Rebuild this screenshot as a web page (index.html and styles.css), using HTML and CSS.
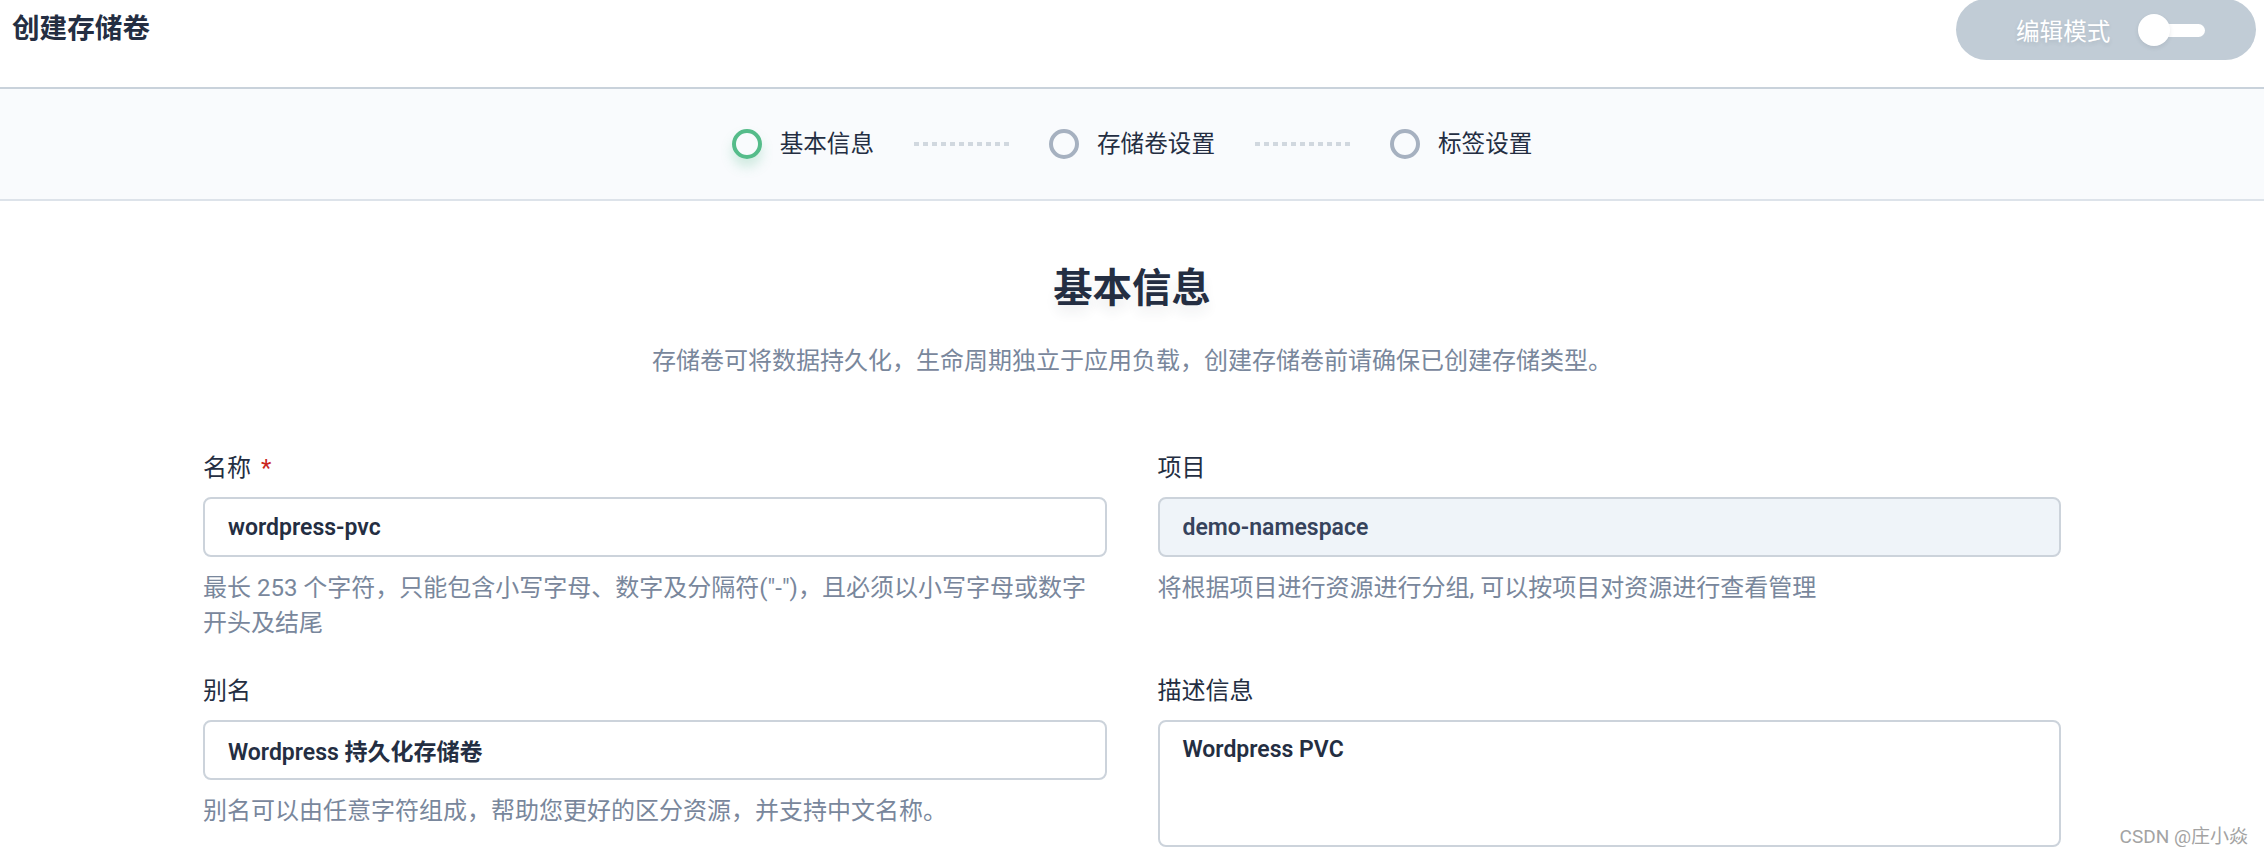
FILE: index.html
```html
<!DOCTYPE html>
<html lang="zh-CN">
<head>
    <meta charset="UTF-8">
    <meta name="viewport" content="width=device-width, initial-scale=1.0">
    <title>创建存储卷</title>
    <link rel="stylesheet" href="styles.css">
</head>
<body>
    <header class="top-bar">
        <h1 class="page-title">创建存储卷</h1>
        <div class="mode-toggle">
            <span class="mode-label">编辑模式</span>
            <span class="switch"></span>
        </div>
    </header>

    <nav class="steps">
        <div class="step active">
            <span class="step-dot"></span>
            <span class="step-name">基本信息</span>
        </div>
        <span class="step-line"></span>
        <div class="step">
            <span class="step-dot"></span>
            <span class="step-name">存储卷设置</span>
        </div>
        <span class="step-line"></span>
        <div class="step">
            <span class="step-dot"></span>
            <span class="step-name">标签设置</span>
        </div>
    </nav>

    <section class="content">
        <h2 class="section-title">基本信息</h2>
        <p class="section-desc">存储卷可将数据持久化，生命周期独立于应用负载，创建存储卷前请确保已创建存储类型。</p>

        <div class="form-grid">
            <div class="form-group">
                <label for="name">名称 <span class="required">*</span></label>
                <input type="text" id="name" value="wordpress-pvc">
                <p class="hint">最长 253 个字符，只能包含小写字母、数字及分隔符("-")，且必须以小写字母或数字开头及结尾</p>
            </div>
            <div class="form-group">
                <label for="project">项目</label>
                <input type="text" id="project" value="demo-namespace" disabled>
                <p class="hint">将根据项目进行资源进行分组, 可以按项目对资源进行查看管理</p>
            </div>
            <div class="form-group">
                <label for="alias">别名</label>
                <input type="text" id="alias" value="Wordpress 持久化存储卷">
                <p class="hint">别名可以由任意字符组成，帮助您更好的区分资源，并支持中文名称。</p>
            </div>
            <div class="form-group">
                <label for="desc">描述信息</label>
                <textarea id="desc">Wordpress PVC</textarea>
            </div>
        </div>
    </section>

    <div class="watermark">CSDN @庄小焱</div>
</body>
</html>
```

FILE: styles.css
```css
body {
    font-family: Roboto, "Noto Sans CJK SC", sans-serif;
    font-size: 24px;
    color: #242e42;
    background-color: #ffffff;
    margin: 0;
    padding: 0;
    overflow: hidden;
}
.top-bar {
    display: flex;
    justify-content: space-between;
    align-items: flex-start;
    height: 87px;
    padding: 0 8px 0 12px;
    border-bottom: 2px solid #c9d2db;
}
.page-title {
    margin: 0;
    font-size: 27.6px;
    font-weight: 700;
    line-height: 58px;
    color: #242e42;
}
.mode-toggle {
    display: flex;
    align-items: center;
    gap: 28px;
    width: 300px;
    height: 61px;
    margin-top: -1px;
    padding: 0 48px 0 60px;
    box-sizing: border-box;
    background: #c1ccd6;
    border-radius: 31px;
}
.mode-label {
    flex-shrink: 0;
    white-space: nowrap;
    color: #ffffff;
    font-size: 23.6px;
    text-shadow: 0 2px 4px rgba(36, 46, 66, 0.12);
}
.switch {
    position: relative;
    flex-shrink: 0;
    width: 67px;
    height: 32px;
}
.switch::before {
    content: "";
    position: absolute;
    left: 4px;
    right: 0;
    top: 10px;
    height: 13px;
    border-radius: 7px;
    background: #ffffff;
}
.switch::after {
    content: "";
    position: absolute;
    left: 0;
    top: 0;
    width: 32px;
    height: 32px;
    border-radius: 50%;
    background: #ffffff;
    box-shadow: 0 2px 4px rgba(36, 46, 66, 0.1);
}
.steps {
    display: flex;
    justify-content: center;
    align-items: center;
    height: 110px;
    background: #f9fbfd;
    border-bottom: 2px solid #dde3ea;
}
.step {
    display: flex;
    align-items: center;
    gap: 18px;
}
.step-dot {
    width: 22px;
    height: 22px;
    border: 4px solid #a6b1c0;
    border-radius: 50%;
}
.step.active .step-dot {
    border-color: #55bc8a;
    box-shadow: 0 8px 12px rgba(85, 188, 138, 0.25);
}
.step-name {
    color: #242e42;
    font-size: 23.6px;
    line-height: 34px;
}
.step-line {
    width: 95px;
    height: 4px;
    margin: 0 40px;
    background: repeating-linear-gradient(to right, #d1d8df 0, #d1d8df 5px, transparent 5px, transparent 9px);
}
.content {
    width: 1858px;
    margin: 0 auto;
}
.section-title {
    margin: 60px 0 0;
    text-align: center;
    font-size: 39.4px;
    font-weight: 700;
    line-height: 56px;
    color: #242e42;
    text-shadow: 0 8px 12px rgba(36, 46, 66, 0.08);
}
.section-desc {
    margin: 27px 0 0;
    text-align: center;
    line-height: 34px;
    color: #79879c;
}
.form-grid {
    display: grid;
    grid-template-columns: 1fr 1fr;
    column-gap: 51px;
    row-gap: 33px;
    margin-top: 73px;
}
.form-group label {
    display: block;
    line-height: 34px;
    margin-bottom: 12px;
    color: #242e42;
}
.required {
    color: #ca2621;
    margin-left: 4px;
}
.form-group input, .form-group textarea {
    display: block;
    width: 100%;
    height: 60px;
    padding: 0 23px;
    box-sizing: border-box;
    border: 2px solid #ccd3db;
    border-radius: 8px;
    background: #ffffff;
    font-family: inherit;
    font-size: 23px;
    font-weight: 600;
    color: #242e42;
    outline: none;
}
.form-group input:disabled {
    background: #eff4f9;
    color: #36435c;
}
.form-group textarea {
    height: 127px;
    padding-top: 11px;
    line-height: 34px;
    resize: none;
}
.hint {
    margin: 14px 0 0;
    line-height: 35px;
    color: #79879c;
}
.watermark {
    position: absolute;
    right: 16px;
    bottom: 6px;
    font-size: 19px;
    color: #a3a3a3;
}
```
